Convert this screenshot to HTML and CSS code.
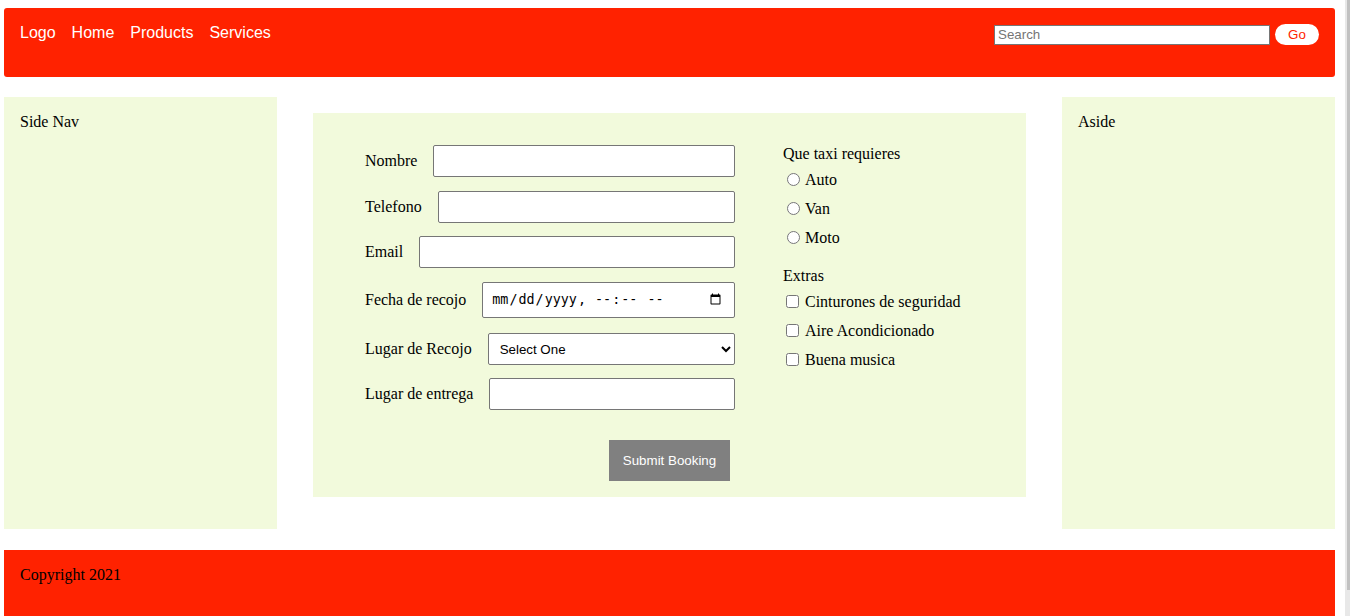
FILE: index.html
```html
<!DOCTYPE html>
<html lang="es">
<head>
<meta charset="utf-8">
<title>Taxi Booking</title>
<link rel="stylesheet" href="styles.css">
</head>
<body>
<header class="top">
  <nav class="menu">
    <a href="#">Logo</a>
    <a href="#">Home</a>
    <a href="#">Products</a>
    <a href="#">Services</a>
  </nav>
  <form class="search">
    <input class="search-input" type="text" placeholder="Search">
    <button class="search-go" type="button">Go</button>
  </form>
</header>
<div class="layout">
  <div class="side">Side Nav</div>
  <main class="main">
    <form class="booking">
      <div class="cols">
        <div class="fields">
          <div class="row"><label>Nombre</label><input class="field" type="text"></div>
          <div class="row"><label>Telefono</label><input class="field" type="text"></div>
          <div class="row tight"><label>Email</label><input class="field" type="text"></div>
          <div class="row"><label>Fecha de recojo</label><input class="field date" type="datetime-local"></div>
          <div class="row loose"><label>Lugar de Recojo</label><select class="field sel"><option>Select One</option></select></div>
          <div class="row tight"><label>Lugar de entrega</label><input class="field" type="text"></div>
        </div>
        <div class="options">
          <div class="group-title">Que taxi requieres</div>
          <label class="opt first"><input class="radio" type="radio" name="taxi">Auto</label>
          <label class="opt"><input class="radio" type="radio" name="taxi">Van</label>
          <label class="opt"><input class="radio" type="radio" name="taxi">Moto</label>
          <div class="group-title extras">Extras</div>
          <label class="opt first-check"><input class="check" type="checkbox">Cinturones de seguridad</label>
          <label class="opt"><input class="check" type="checkbox">Aire Acondicionado</label>
          <label class="opt"><input class="check" type="checkbox">Buena musica</label>
        </div>
      </div>
      <div class="submit-row"><button class="submit" type="button">Submit Booking</button></div>
    </form>
  </main>
  <div class="side">Aside</div>
</div>
<footer class="foot">Copyright 2021</footer>
<div class="scrollbar"><div class="thumb"></div></div>
</body>
</html>
```
FILE: styles.css
```css
html, body {
  margin: 0;
  padding: 0;
}
body {
  padding: 8px 15px 0 4px;
  font-family: "Liberation Serif", "Times New Roman", serif;
  font-size: 16px;
  color: #000;
  background: #fff;
}
.top {
  height: 69px;
  box-sizing: border-box;
  background: #ff2200;
  border-radius: 3px;
  padding: 16px;
  display: flex;
  justify-content: space-between;
  align-items: flex-start;
}
.menu {
  display: flex;
  gap: 16px;
  font-family: "Liberation Sans", Arial, sans-serif;
  line-height: 18px;
}
.menu a {
  color: #fff;
  text-decoration: none;
}
.search {
  display: flex;
  align-items: center;
  gap: 5px;
  margin: 0;
}
.search-input {
  width: 276px;
  height: 20px;
  box-sizing: border-box;
  border: 1px solid #767676;
  padding: 1px 3px;
  font-family: "Liberation Sans", Arial, sans-serif;
  font-size: 13.33px;
  margin: 0;
}
.search-go {
  width: 44px;
  height: 21px;
  border: none;
  border-radius: 11px;
  background: #fff;
  color: #ff2200;
  font-family: "Liberation Sans", Arial, sans-serif;
  font-size: 13.33px;
  padding: 0;
  margin: 0;
}
.layout {
  display: grid;
  grid-template-columns: 273px 1fr 273px;
  margin-top: 20px;
}
.side {
  background: #f2fadc;
  padding: 16px;
  height: 432px;
  box-sizing: border-box;
  line-height: 18px;
}
.main {
  padding: 16px 36px 32px;
}
.booking {
  background: #f2fadc;
  padding: 32px 52px 16px;
  margin: 0;
}
.cols {
  display: grid;
  grid-template-columns: 370px 1fr;
  column-gap: 48px;
}
.fields {
  display: flex;
  flex-direction: column;
  gap: 14px;
}
.row {
  display: flex;
  align-items: center;
  gap: 16px;
}
.tight {
  margin-top: -1px;
}
.loose {
  margin-top: 1px;
}
.row label {
  white-space: nowrap;
  line-height: 18px;
}
.field {
  flex: 1;
  height: 32px;
  box-sizing: border-box;
  margin: 0;
  border: 1px solid #767676;
  border-radius: 2px;
  background: #fff;
  font-family: "Liberation Sans", Arial, sans-serif;
  font-size: 13.33px;
}
.date {
  height: 36px;
  font-family: "DejaVu Sans Mono", monospace;
  font-size: 13.4px;
  padding: 0 10px 0 8px;
}
.sel {
  padding: 0 6px 0 7px;
  color: #000;
}
.options {
  display: flex;
  flex-direction: column;
  line-height: 18px;
}
.group-title {
  height: 18px;
}
.extras {
  margin-top: 15px;
}
.opt {
  display: flex;
  align-items: center;
  height: 29px;
}
.first {
  margin-top: 2px;
}
.first-check {
  margin-top: 2px;
}
.radio {
  width: 13px;
  height: 13px;
  margin: 0 5px 0 4px;
}
.check {
  width: 13px;
  height: 13px;
  margin: 0 6px 0 3px;
}
.submit-row {
  display: flex;
  justify-content: center;
  margin-top: 30px;
}
.submit {
  background: #808080;
  color: #fff;
  border: none;
  font-family: "Liberation Sans", Arial, sans-serif;
  font-size: 13.33px;
  padding: 0 14px;
  height: 41px;
  margin: 0;
}
.foot {
  margin-top: 21px;
  background: #ff2200;
  padding: 16px;
  height: 76px;
  box-sizing: border-box;
  line-height: 18px;
}
.scrollbar {
  position: fixed;
  top: 0;
  right: 0;
  bottom: 0;
  width: 5px;
  background: #e8e8e8;
}
.thumb {
  margin-left: 2px;
  height: 590px;
  background: #c1c1c1;
}
```
